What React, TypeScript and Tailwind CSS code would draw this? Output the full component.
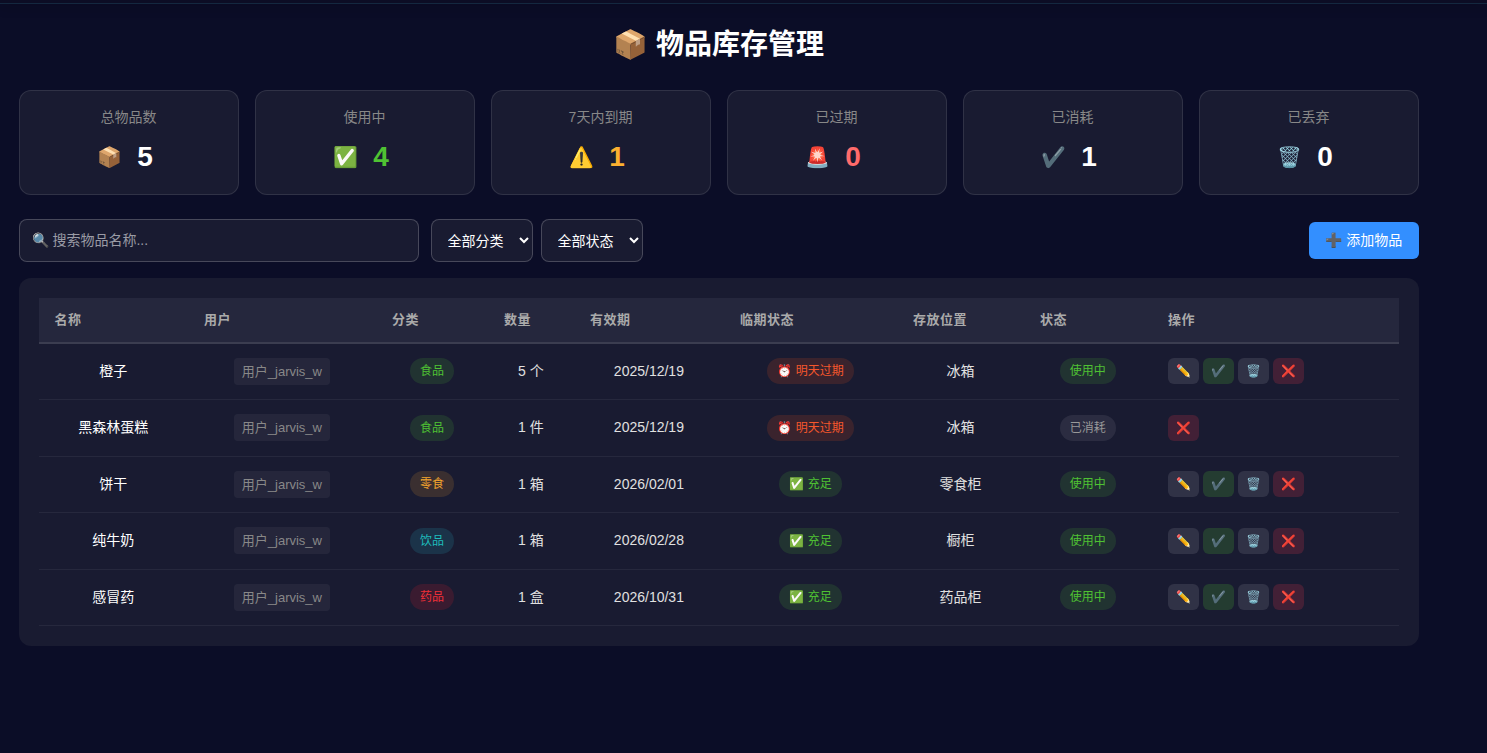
import React, { useState } from 'react';

interface Item {
  id: number;
  name: string;
  user: string;
  category: string;
  quantity: string;
  expiry: string;
  expiring: boolean;
  location: string;
  consumed: boolean;
}

const STATS = [
  { label: '总物品数', icon: '📦', value: 5, color: 'text-white' },
  { label: '使用中', icon: '✅', value: 4, color: 'text-[#4fc233]' },
  { label: '7天内到期', icon: '⚠️', value: 1, color: 'text-[#fbb030]' },
  { label: '已过期', icon: '🚨', value: 0, color: 'text-[#ff6b6b]' },
  { label: '已消耗', icon: '✔️', value: 1, color: 'text-white' },
  { label: '已丢弃', icon: '🗑️', value: 0, color: 'text-white' },
];

const COLUMNS = [
  { title: '名称', width: 'w-[149.4px]' },
  { title: '用户', width: 'w-[188px]' },
  { title: '分类', width: 'w-[112px]' },
  { title: '数量', width: 'w-[86px]' },
  { title: '有效期', width: 'w-[150px]' },
  { title: '临期状态', width: 'w-[173.2px]' },
  { title: '存放位置', width: 'w-[126.8px]' },
  { title: '状态', width: 'w-[128px]' },
  { title: '操作', width: 'w-[246.6px]' },
];

const CATEGORY_STYLES: Record<string, string> = {
  食品: 'bg-[#4fc233]/15 text-[#4fc233]',
  零食: 'bg-[#fba62d]/15 text-[#f5a62d]',
  饮品: 'bg-[#1b3349] text-[#1ebcbc]',
  药品: 'bg-[#f5222d]/15 text-[#ee2f37]',
};

const ITEMS: Item[] = [
  { id: 1, name: '橙子', user: '用户_jarvis_w', category: '食品', quantity: '5 个', expiry: '2025/12/19', expiring: true, location: '冰箱', consumed: false },
  { id: 2, name: '黑森林蛋糕', user: '用户_jarvis_w', category: '食品', quantity: '1 件', expiry: '2025/12/19', expiring: true, location: '冰箱', consumed: true },
  { id: 3, name: '饼干', user: '用户_jarvis_w', category: '零食', quantity: '1 箱', expiry: '2026/02/01', expiring: false, location: '零食柜', consumed: false },
  { id: 4, name: '纯牛奶', user: '用户_jarvis_w', category: '饮品', quantity: '1 箱', expiry: '2026/02/28', expiring: false, location: '橱柜', consumed: false },
  { id: 5, name: '感冒药', user: '用户_jarvis_w', category: '药品', quantity: '1 盒', expiry: '2026/10/31', expiring: false, location: '药品柜', consumed: false },
];

const Cell: React.FC<{ className?: string; children: React.ReactNode }> = ({ className = 'justify-center', children }) => (
  <td className="border-b border-white/6 p-0">
    <div className={`flex items-center ${className}`}>{children}</div>
  </td>
);

const Tag: React.FC<{ className: string; children: React.ReactNode }> = ({ className, children }) => (
  <span className={`flex h-[26px] items-center rounded-full px-[10px] text-xs ${className}`}>
    {children}
  </span>
);

const ActionButton: React.FC<{ className: string; title: string; children: React.ReactNode }> = ({ className, title, children }) => (
  <button title={title} className={`flex h-[26px] w-[31px] items-center justify-center rounded-md text-xs ${className}`}>
    {children}
  </button>
);

const ItemRow: React.FC<{ item: Item }> = ({ item }) => (
  <tr className="h-[56.5px] text-sm text-[#e0e0e0]">
    <Cell className="justify-center pb-[0.6px] text-white">{item.name}</Cell>
    <Cell>
      <span className="flex h-[27px] items-center rounded bg-white/5 px-2 pt-[1.5px] text-[13px] text-[#888]">
        {item.user}
      </span>
    </Cell>
    <Cell>
      <Tag className={CATEGORY_STYLES[item.category]}>{item.category}</Tag>
    </Cell>
    <Cell className="justify-center pb-[0.6px]">{item.quantity}</Cell>
    <Cell className="justify-center pb-[0.6px]">{item.expiry}</Cell>
    <Cell>
      {item.expiring
        ? <Tag className="bg-[#fa541c]/15 text-[#f5572c]">⏰ 明天过期</Tag>
        : <Tag className="bg-[#4fc233]/15 text-[#4fc233]">✅ 充足</Tag>}
    </Cell>
    <Cell className="justify-center pb-[0.6px]">{item.location}</Cell>
    <Cell>
      {item.consumed
        ? <Tag className="bg-white/8 text-[#999]">已消耗</Tag>
        : <Tag className="bg-[#4fc233]/15 text-[#4fc233]">使用中</Tag>}
    </Cell>
    <Cell className="gap-1 px-4">
      {!item.consumed && (
        <>
          <ActionButton title="编辑" className="bg-white/10">✏️</ActionButton>
          <ActionButton title="消耗" className="bg-[#4fc233]/20">✔️</ActionButton>
          <ActionButton title="丢弃" className="bg-white/10">🗑️</ActionButton>
        </>
      )}
      <ActionButton title="删除" className="bg-[#e6394a]/20">❌</ActionButton>
    </Cell>
  </tr>
);

const App: React.FC = () => {
  const [search, setSearch] = useState('');
  const [category, setCategory] = useState('全部分类');
  const [status, setStatus] = useState('全部状态');

  const items = ITEMS.filter(item =>
    item.name.includes(search) &&
    (category === '全部分类' || item.category === category) &&
    (status === '全部状态' || (status === '已消耗') === item.consumed)
  );

  return (
    <div className="min-h-screen bg-[#0b0d27] font-['Liberation_Sans','Noto_Sans_CJK_SC',sans-serif] text-white">
      <header className="h-1 border-b border-[#14283f] bg-[#0c0d24] shadow-[0_2px_12px_rgba(0,0,0,0.3)]" />
      <main className="ml-[18.5px] w-[1400px]">
        <h1 className="flex h-[86px] items-center justify-center pb-1 text-[28px] font-bold whitespace-pre">
          📦 物品库存管理
        </h1>

        <div className="grid grid-cols-6 gap-4">
          {STATS.map(stat => (
            <div key={stat.label} className="h-[105px] rounded-xl border border-white/10 bg-[#191b31] pt-4 text-center">
              <div className="text-sm leading-[21px] text-[#888]">{stat.label}</div>
              <div className="mt-2 flex h-[42px] items-center justify-center gap-[15.4px] pr-2">
                <span className="ml-[0.6px] text-xl">{stat.icon}</span>
                <span className={`text-[28px] font-bold ${stat.color}`}>{stat.value}</span>
              </div>
            </div>
          ))}
        </div>

        <div className="mt-6 flex h-[43px] items-center">
          <input
            value={search}
            onChange={e => setSearch(e.target.value)}
            placeholder="🔍 搜索物品名称..."
            className="h-[43px] w-[400px] rounded-lg border border-white/20 bg-[#191b31] px-3 pb-0.5 text-sm outline-none placeholder:text-[#9a9ba5]"
          />
          <select
            value={category}
            onChange={e => setCategory(e.target.value)}
            className="ml-3 h-[43px] w-[102px] rounded-lg border border-white/20 bg-[#191b31] pl-3 text-sm"
          >
            <option>全部分类</option>
            {Object.keys(CATEGORY_STYLES).map(name => <option key={name}>{name}</option>)}
          </select>
          <select
            value={status}
            onChange={e => setStatus(e.target.value)}
            className="ml-2 h-[43px] w-[102px] rounded-lg border border-white/20 bg-[#191b31] pl-3 text-sm"
          >
            <option>全部状态</option>
            <option>使用中</option>
            <option>已消耗</option>
          </select>
          <button className="ml-auto h-[37px] w-[110px] rounded-md bg-[#338fff] pb-px pl-[0.6px] text-sm text-white">
            ➕ 添加物品
          </button>
        </div>

        <div className="mt-4 h-[368px] rounded-xl bg-[#191b31] p-5">
          <table className="w-full table-fixed border-separate border-spacing-0">
            <thead>
              <tr className="h-[45.5px] bg-[#25273d]">
                {COLUMNS.map(column => (
                  <th key={column.title} className={`border-b-2 border-white/10 px-4 py-0 text-left text-[13px] font-bold tracking-[0.5px] text-[#aaa] ${column.width}`}>
                    {column.title}
                  </th>
                ))}
              </tr>
            </thead>
            <tbody>
              {items.map(item => <ItemRow key={item.id} item={item} />)}
            </tbody>
          </table>
        </div>
      </main>
    </div>
  );
};

export default App;
